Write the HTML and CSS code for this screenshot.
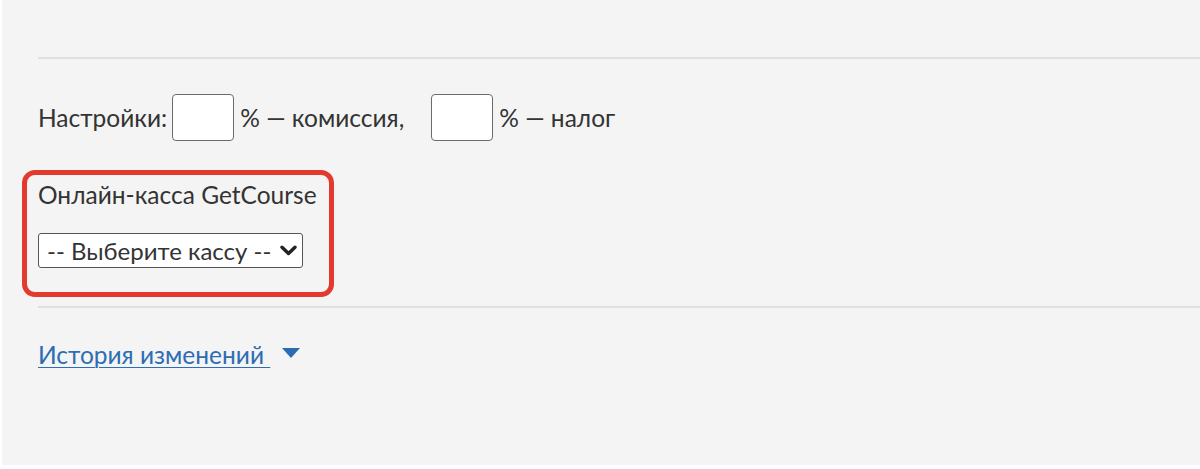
FILE: index.html
```html
<!DOCTYPE html>
<html lang="ru">
<head>
  <meta charset="UTF-8" />
  <title>Настройки</title>
  <link rel="stylesheet" href="styles.css">
</head>
<body>
  <div class="page">
    <hr class="divider top">

    <div class="settings">
      <span class="label">Настройки:</span>
      <input type="text" class="num-input" />
      <span class="after">% — комиссия,</span>
      <input type="text" class="num-input second" />
      <span class="after">% — налог</span>
    </div>

    <div class="highlight">
      <div class="kassa-title">Онлайн-касса GetCourse</div>
      <div class="select-box">
        <select class="kassa-select">
          <option>-- Выберите кассу --</option>
        </select>
        <svg class="chevron" width="17" height="11" viewBox="0 0 17 11">
          <path d="M2 2.2 L8.5 8.5 L15 2.2" fill="none" stroke="#222" stroke-width="3.4" stroke-linecap="round" stroke-linejoin="round"/>
        </svg>
      </div>
    </div>

    <hr class="divider bottom">

    <div class="history">
      <a href="#" class="history-link">История изменений&nbsp;</a>
      <svg class="caret" width="18" height="10" viewBox="0 0 18 10">
        <path d="M0 0 L18 0 L9 10 Z" fill="#2b6cb0"/>
      </svg>
    </div>
  </div>
</body>
</html>
```

FILE: styles.css
```css
* {
  box-sizing: border-box;
}

html, body {
  margin: 0;
  padding: 0;
  background: #ffffff;
  font-family: 'Lato', 'Open Sans', sans-serif;
  color: #333;
}

.page {
  margin-left: 2px;
  height: 465px;
  background-color: #f4f4f4;
  padding: 57px 0 0 36px;
  overflow: hidden;
}

.divider {
  border: none;
  border-top: 2px solid #e0e0e0;
  margin: 0;
}

.settings {
  display: flex;
  align-items: center;
  margin-top: 35px;
  font-size: 24.5px;
}

.num-input {
  width: 62px;
  height: 47px;
  margin: 0 6px 0 5px;
  border: 1.5px solid #6b6b6b;
  border-radius: 4px;
  background: #fff;
  font-size: 20px;
}

.num-input.second {
  margin-left: 27px;
}

.highlight {
  width: fit-content;
  margin: 29px 0 0 -16px;
  padding: 5px 12px 24px 11px;
  border: 5px solid #e23a2f;
  border-radius: 13px;
}

.kassa-title {
  font-size: 24.5px;
  line-height: 30px;
}

.select-box {
  display: flex;
  align-items: center;
  width: 265px;
  height: 35px;
  margin-top: 23px;
  padding: 0 5px 0 8px;
  border: 1px solid #555;
  border-radius: 3px;
  background: #fff;
}

.kassa-select {
  appearance: none;
  -webkit-appearance: none;
  border: none;
  background: transparent;
  padding: 0;
  font-family: inherit;
  font-size: 24px;
  color: #333;
  flex: 1;
  outline: none;
}

.chevron {
  flex: none;
}

.divider.bottom {
  margin-top: 9px;
}

.history {
  display: flex;
  align-items: center;
  margin-top: 32px;
}

.history-link {
  font-size: 24.5px;
  color: #2d6db3;
  text-decoration: underline;
  text-underline-offset: 3px;
  text-decoration-thickness: 1px;
}

.caret {
  margin-left: 12px;
  margin-top: -4px;
}
```
